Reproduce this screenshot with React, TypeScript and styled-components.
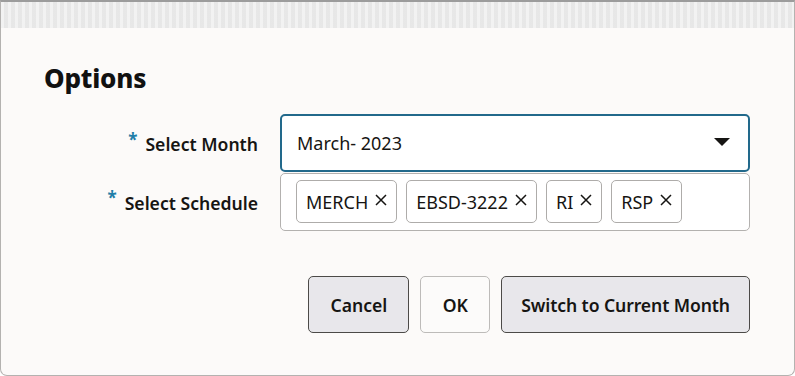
import React from 'react';
import styled, { createGlobalStyle } from 'styled-components';

const GlobalStyle = createGlobalStyle`
  html, body {
    margin: 0;
    padding: 0;
    background: #ffffff;
  }
  body {
    font-family: "Noto Sans", "Open Sans", Arial, sans-serif;
    color: #161513;
  }
`;

const chips = ['MERCH', 'EBSD-3222', 'RI', 'RSP'];

const App = () => {
  return (
    <>
      <GlobalStyle />
      <StyledFrame>
        <StyledTitleBar />
        <StyledBody>
          <StyledHeading>Options</StyledHeading>
          <StyledForm>
            <StyledLabel>
              <StyledRequired>*</StyledRequired>
              Select Month
            </StyledLabel>
            <StyledSelect>
              <span>March- 2023</span>
              <StyledCaret viewBox="0 0 16 8" aria-hidden>
                <path d="M0 0 H16 L8 8 Z" fill="#161513" />
              </StyledCaret>
            </StyledSelect>

            <StyledLabel>
              <StyledRequired>*</StyledRequired>
              Select Schedule
            </StyledLabel>
            <StyledChipBox>
              {chips.map((chip) => (
                <StyledChip key={chip}>
                  {chip}
                  <StyledRemove viewBox="0 0 12 12" aria-hidden>
                    <path d="M1 1 L11 11 M11 1 L1 11" stroke="#161513" strokeWidth="1.5" />
                  </StyledRemove>
                </StyledChip>
              ))}
            </StyledChipBox>
          </StyledForm>

          <StyledActions>
            <StyledButton $variant="default">Cancel</StyledButton>
            <StyledButton $variant="outline">OK</StyledButton>
            <StyledButton $variant="default" $tight>Switch to Current Month</StyledButton>
          </StyledActions>
        </StyledBody>
      </StyledFrame>
    </>
  );
};

export default App;

const StyledFrame = styled.div`
  width: 795px;
  height: 376px;
  box-sizing: border-box;
  display: flex;
  flex-direction: column;
  border: 1px solid #b4b2b0;
  border-top: 2px solid #9c9c9c;
  border-radius: 0 0 7px 7px;
  background: #fcfaf9;
  overflow: hidden;
`;

const StyledTitleBar = styled.div`
  height: 26px;
  flex-shrink: 0;
  background:
    repeating-linear-gradient(90deg, rgba(255, 255, 255, 0.35) 0 3px, rgba(0, 0, 0, 0.015) 3px 7px),
    #ebebeb;
`;

const StyledBody = styled.div`
  flex: 1;
  display: flex;
  flex-direction: column;
  padding: 33px 44px 0 42px;
`;

const StyledHeading = styled.h1`
  margin: 0 0 0 1px;
  font-size: 26px;
  line-height: 34px;
  font-weight: 800;
  letter-spacing: -0.2px;
  color: #111111;
`;

const StyledForm = styled.div`
  display: grid;
  grid-template-columns: 193px 470px;
  grid-template-rows: 58px 59px;
  column-gap: 22px;
  row-gap: 0;
  margin-top: 19px;
  margin-left: 22px;
`;

const StyledLabel = styled.label`
  display: flex;
  align-items: center;
  justify-content: flex-end;
  font-size: 17.6px;
  font-weight: 600;
  color: #161513;
  padding-top: 2px;
`;

const StyledRequired = styled.span`
  color: #1f7ea8;
  font-size: 17px;
  font-weight: 700;
  margin-right: 8px;
  align-self: flex-start;
  margin-top: 15px;
  line-height: 1;
`;

const _StyledField = styled.div`
  box-sizing: border-box;
  background: #ffffff;
  display: flex;
  align-items: center;
`;

const StyledSelect = styled(_StyledField)`
  border: 2px solid #22698b;
  border-radius: 5px;
  padding: 0 18px 0 15px;
  justify-content: space-between;
  font-size: 18px;
  color: #161513;
`;

const StyledCaret = styled.svg`
  width: 16px;
  height: 8px;
  margin-top: -2px;
`;

const StyledChipBox = styled(_StyledField)`
  border: 1px solid #b3b1af;
  border-radius: 5px;
  margin-top: 1px;
  padding: 0 0 1px 15px;
  gap: 9px;
`;

const StyledChip = styled.span`
  box-sizing: border-box;
  height: 43px;
  display: inline-flex;
  align-items: center;
  gap: 7px;
  padding: 0 9px 0 9px;
  border: 1px solid #aeacaa;
  border-radius: 5px;
  background: #ffffff;
  font-size: 18px;
  color: #161513;
`;

const StyledRemove = styled.svg`
  width: 12px;
  height: 12px;
  margin-top: -3px;
`;

const StyledActions = styled.div`
  display: flex;
  justify-content: flex-end;
  gap: 11px;
  margin-top: 45px;
`;

const StyledButton = styled.button<{ $variant: 'default' | 'outline'; $tight?: boolean }>`
  box-sizing: border-box;
  height: 57px;
  padding: 0 ${({ $tight }) => ($tight ? '19px' : '21px')};
  min-width: 70px;
  border-radius: 5px;
  font-family: inherit;
  font-size: 17.6px;
  font-weight: 600;
  letter-spacing: ${({ $tight }) => ($tight ? '-0.1px' : '0')};
  color: #161513;
  cursor: pointer;
  background: ${({ $variant }) => ($variant === 'outline' ? '#fcfbfa' : '#e8e7eb')};
  border: ${({ $variant }) => ($variant === 'outline' ? '1px solid #bdbbb9' : '1.5px solid #4c4a48')};
`;
